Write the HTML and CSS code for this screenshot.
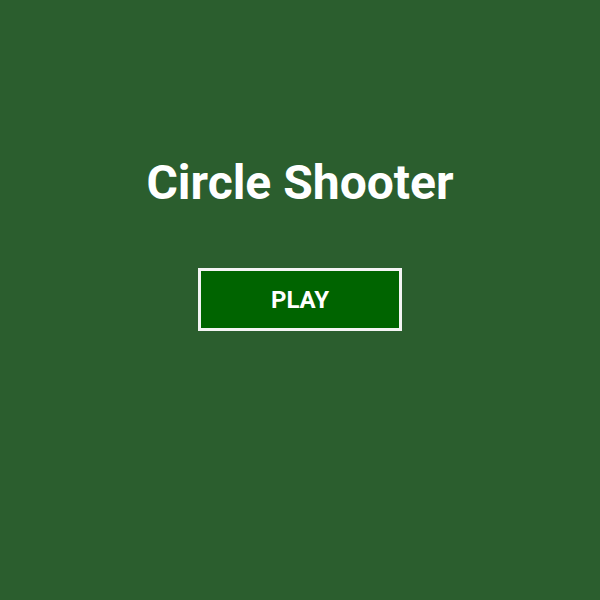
FILE: index.html
```html
<!DOCTYPE html>
<html lang="en">
<head>
  <meta charset="UTF-8">
  <meta name="viewport" content="width=device-width, initial-scale=1.0">
  <title>Circle Shooter</title>
  <link rel="stylesheet" href="styles.css">
</head>
<body>
  <div class="menu">
    <h1>Circle Shooter</h1>
    <button class="play" id="play">PLAY</button>
  </div>
</body>
</html>
```

FILE: styles.css
```css
body {
  margin: 0;
  height: 600px;
  background: #2b5e2e;
  font-family: Roboto, "Liberation Sans", sans-serif;
  color: white;
}
.menu {
  display: flex;
  flex-direction: column;
  align-items: center;
  padding-top: 155px;
}
h1 {
  margin: 0;
  font-size: 48px;
  line-height: 56px;
  font-weight: bold;
}
.play {
  margin-top: 57px;
  width: 204px;
  height: 63px;
  box-sizing: border-box;
  background: #006400;
  color: white;
  border: 3px solid #f4f4f4;
  font-family: inherit;
  font-size: 24px;
  font-weight: bold;
  cursor: pointer;
}
```
